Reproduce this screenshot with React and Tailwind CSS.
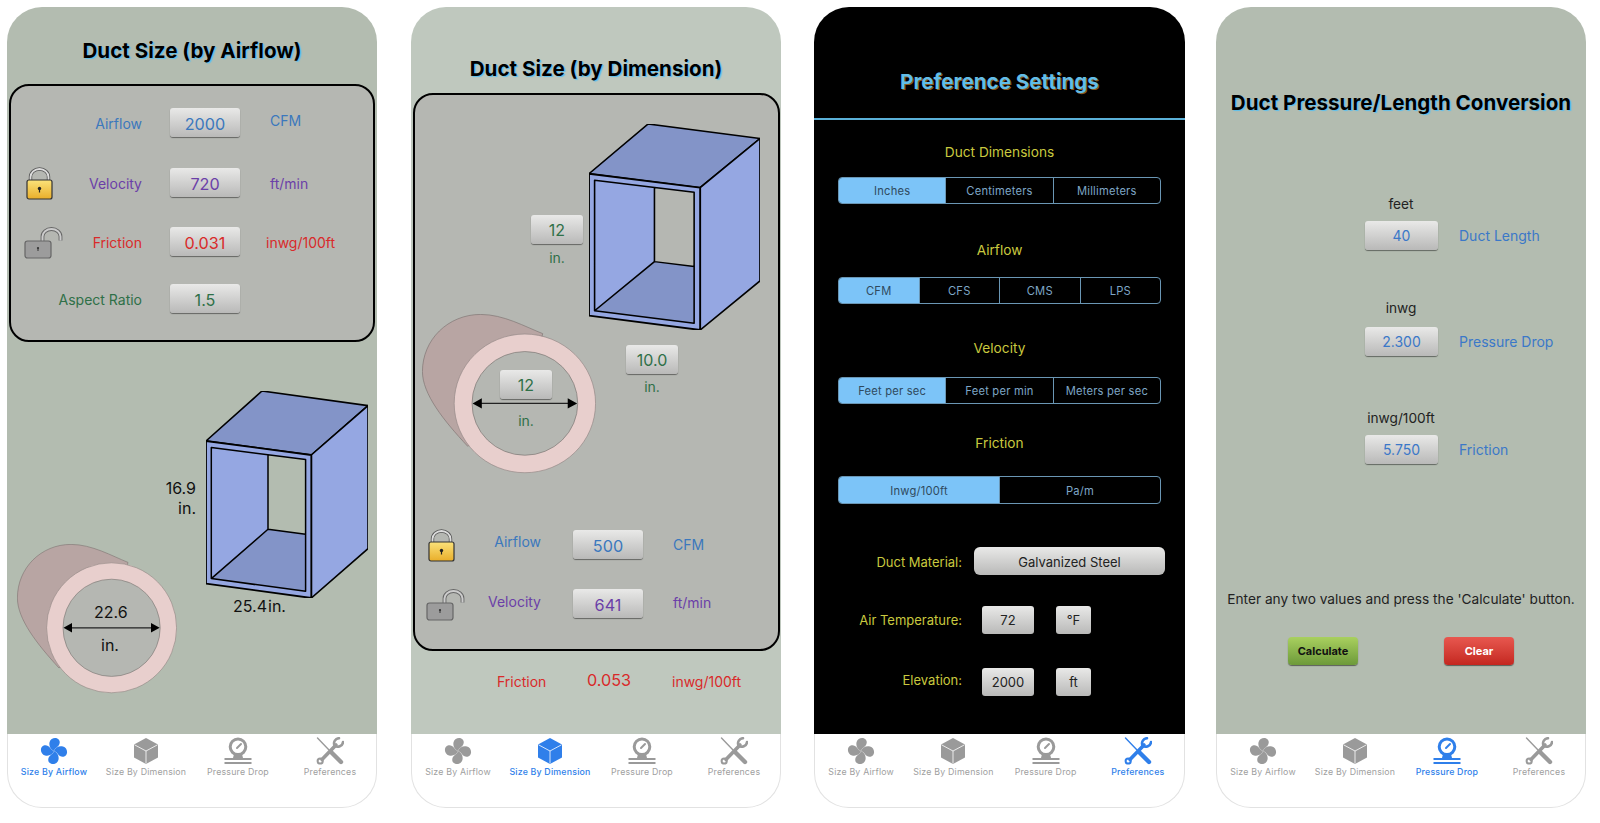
import React from 'react';

const fieldClass = 'flex items-center justify-center rounded-[3px] bg-linear-to-b from-[#e9e9e8] to-[#b9b9b8] shadow-[0_1px_1px_rgba(0,0,0,0.45)]';

// Grey value box used all over the screens
const Field = ({ value, className, textClass }) => (
  <div className={`${fieldClass} ${className}`}>
    <span className={textClass}>{value}</span>
  </div>
);

const FanIcon = ({ color }) => (
  <svg width="28" height="28" viewBox="0 0 28 28" fill={color}>
    {[0, 90, 180, 270].map(deg => (
      <path
        key={deg}
        transform={`rotate(${deg} 14 14)`}
        d="M14 14 C10.5 12.5 8.6 9 9.6 5 C10.6 1 15.8 -0.3 18.4 2.2 C21 4.8 19.5 8.4 17.2 10 C15.6 11.2 14.6 12.4 14 14Z"
      />
    ))}
  </svg>
);

const CubeIcon = ({ color }) => (
  <svg width="28" height="28" viewBox="0 0 28 28">
    <path d="M14 1 L26 7.5 V20.5 L14 27 L2 20.5 V7.5Z" fill={color} />
    <path d="M2.5 7.8 L14 14 L25.5 7.8 M14 14 V26.5" stroke="#fff" strokeWidth="0.8" fill="none" />
  </svg>
);

const GaugeIcon = ({ color }) => (
  <svg width="28" height="28" viewBox="0 0 28 28" fill="none" stroke={color}>
    <circle cx="14" cy="9.8" r="7.8" strokeWidth="3" />
    <path d="M13 11 L17 7" strokeWidth="2" strokeLinecap="round" />
    <path d="M10 17 L18 17 L19 21 L9 21Z" fill={color} stroke="none" />
    <path d="M0.5 22 H27.5 M0.5 26 H27.5" strokeWidth="1.8" />
  </svg>
);

const ToolsIcon = ({ color }) => (
  <svg width="28" height="28" viewBox="0 0 28 28" fill="none" stroke={color} strokeLinecap="round">
    <path d="M1.5 1 L13 13" strokeWidth="1.4" />
    <path d="M15 15 L25 25" strokeWidth="4.4" />
    <path d="M6 22.5 L20 8" strokeWidth="3.6" />
    <circle cx="4.2" cy="24" r="2.6" strokeWidth="2" />
    <path d="M23 1.2 A5.2 5.2 0 0 0 18.5 8.5 A5.2 5.2 0 0 0 27 5" strokeWidth="2.6" />
  </svg>
);

const tabs = [
  { label: 'Size By Airflow', Icon: FanIcon },
  { label: 'Size By Dimension', Icon: CubeIcon },
  { label: 'Pressure Drop', Icon: GaugeIcon },
  { label: 'Preferences', Icon: ToolsIcon },
];

const TabBar = ({ active }) => (
  <div className="grid grid-cols-4 h-[74px] shrink-0 bg-white rounded-b-[35px] border border-t-0 border-[#e2e2e2]">
    {tabs.map((tab, idx) => {
      const color = idx === active ? '#2f7fea' : '#9a9a9a';
      return (
        <div key={tab.label} className="flex flex-col items-center pt-[3px]">
          <tab.Icon color={color} />
          <span
            className={`mt-[1px] text-[8.8px] leading-[12px] tracking-[0.2px] whitespace-nowrap ${idx === active ? 'text-[#2f7fea] font-medium' : 'text-[#a0a0a0]'}`}
          >
            {tab.label}
          </span>
        </div>
      );
    })}
  </div>
);

const ClosedLock = () => (
  <svg width="27" height="33" viewBox="0 0 27 33" className="shrink-0 translate-y-[1px]">
    <defs>
      <linearGradient id="gold" x1="0" y1="0" x2="0" y2="1">
        <stop offset="0" stopColor="#fbe27a" />
        <stop offset="1" stopColor="#e9ae2a" />
      </linearGradient>
    </defs>
    <path d="M4.5 14 V10 A9 8 0 0 1 22.5 10 V14" fill="none" stroke="#555" strokeWidth="3.4" />
    <path d="M4.5 14 V10 A9 8 0 0 1 22.5 10 V14" fill="none" stroke="#ddd" strokeWidth="1.8" />
    <rect x="1" y="13" width="25" height="19" rx="2" fill="url(#gold)" stroke="#333" strokeWidth="1.2" />
    <circle cx="13.5" cy="21.5" r="1.7" fill="#222" />
    <rect x="12.9" y="22" width="1.2" height="3.5" fill="#222" />
  </svg>
);

const OpenLock = () => (
  <svg width="40" height="32" viewBox="0 0 40 32" className="shrink-0 translate-y-[1px]">
    <path d="M18.5 15 V9.5 A9 7.5 0 0 1 36.5 9.5 V13.5" fill="none" stroke="#666" strokeWidth="3.8" />
    <path d="M18.5 15 V9.5 A9 7.5 0 0 1 36.5 9.5 V13.5" fill="none" stroke="#ccc" strokeWidth="2" />
    <rect x="1" y="14" width="26" height="17" rx="2.5" fill="#9c9c9c" stroke="#666" strokeWidth="1.2" />
    <circle cx="14" cy="21" r="1.1" fill="#333" />
    <rect x="13.5" y="21" width="1" height="3" fill="#333" />
  </svg>
);

const DuctBox = ({ className, holeColor }) => (
  <svg viewBox="0 0 162 207" preserveAspectRatio="none" className={`absolute ${className}`} strokeLinejoin="round">
    <path d="M0 50 L56 0 L162 14.6 L105.3 64Z" fill="#8394c8" stroke="#000" strokeWidth="1.6" />
    <path d="M105.3 64 L162 14.6 V157.6 L105.3 207Z" fill="#95a7e2" stroke="#000" strokeWidth="1.6" />
    <path d="M0 50 L105.3 64 V207 L0 192.6Z" fill="#95a7e2" stroke="#000" strokeWidth="1.8" />
    <path d="M62 64.3 L99.6 68.6 V143.3 L62 138.3Z" fill={holeColor} />
    <path d="M5.3 187.6 L62 138.3 L99.6 143.3 V200.3Z" fill="#8394c8" />
    <path d="M5.3 56.6 L99.6 68.6 V200.3 L5.3 187.6Z M62 64 V138.3 L5.3 187.6 M62 138.3 L99.6 143.3" fill="none" stroke="#000" strokeWidth="1.5" />
  </svg>
);

const RoundDuct = ({ className, arrow, innerColor = '#b5b7b2' }) => (
  <svg viewBox="0 0 160 150" preserveAspectRatio="none" className={`absolute ${className}`}>
    <path d="M111 18.4 C95 12 75 0.4 54 0.4 C24 0.4 0.4 24 0.4 54 C0.4 75 20 100 42 124 L94 84Z" fill="#b8a5a3" stroke="#7d7270" strokeWidth="0.6" />
    <circle cx="94.6" cy="83.8" r="65" fill="#e8cfcd" stroke="#8f8482" strokeWidth="0.6" />
    <circle cx="94.6" cy="83.8" r="48.6" fill={innerColor} stroke="#77726f" strokeWidth="0.6" />
    {arrow && (
      <>
        <path d="M53 83.8 H136" stroke="#222" strokeWidth="1.3" />
        <path d="M46.5 83.8 L55 79 V88.6Z M142.7 83.8 L134 79 V88.6Z" fill="#000" />
      </>
    )}
  </svg>
);

// One input row inside the dark-outlined panels
const CalcRow = ({ icon, label, value, unit, color, labelClass, labelTextClass = 'pt-[2px]', unitClass = 'ml-[30px]', className }) => (
  <div className={`flex items-center h-[29px] ${className}`}>
    <div className={`flex items-center justify-end shrink-0 ${labelClass}`}>
      {icon}
      <span className={`ml-auto text-[14px] ${color} ${labelTextClass}`}>{label}</span>
    </div>
    <Field value={value} className="w-[70px] h-[29px] shrink-0" textClass={`pt-[3px] text-[16.2px] ${color}`} />
    {unit && <span className={`text-[14px] ${color} ${unitClass}`}>{unit}</span>}
  </div>
);

const Title = ({ children, className }) => (
  <div className={`flex items-center justify-center shrink-0 text-[20.6px] font-bold text-black [text-shadow:1.5px_1px_1px_#5cc0ee] ${className}`}>
    <span className="translate-y-[1px]">{children}</span>
  </div>
);

const AirflowScreen = () => (
  <div className="flex flex-col w-[370px] h-[801px] ml-[7px] shrink-0">
    <div className="flex flex-col flex-1 bg-[#b3bcb0] rounded-t-[35px]">
      <Title className="h-[77px] pt-[9px]">Duct Size (by Airflow)</Title>
      <div className="ml-[2px] w-[366px] h-[258px] pt-[22px] rounded-[20px] border-2 border-black bg-[#b5b7b2]">
        <CalcRow label="Airflow" value="2000" unit="CFM" color="text-[#3b78bd]" labelClass="w-[131px] mr-[28px]" labelTextClass="pt-[1px]" unitClass="ml-[30px] -translate-y-[2px]" />
        <CalcRow icon={<span className="ml-[15px]"><ClosedLock /></span>} label="Velocity" value="720" unit="ft/min" color="text-[#6b3fa8]" labelClass="w-[131px] mr-[28px]" unitClass="ml-[30px] translate-y-[1px]" className="mt-[31px]" />
        <CalcRow icon={<span className="ml-[13px]"><OpenLock /></span>} label="Friction" value="0.031" unit="inwg/100ft" color="text-[#d92a2a]" labelClass="w-[131px] mr-[28px]" unitClass="ml-[26px] translate-y-[1px]" className="mt-[30px]" />
        <CalcRow label="Aspect Ratio" value="1.5" color="text-[#2f7048]" labelClass="w-[131px] mr-[28px]" className="mt-[28px]" />
      </div>
      <div className="relative flex-1 text-[16px] text-[#111]">
        <DuctBox className="left-[199px] top-[49px] w-[162px] h-[207px]" holeColor="#b3bcb0" />
        <RoundDuct className="left-[10px] top-[202px] w-[160px] h-[150px]" arrow />
        <div className="absolute right-[181px] top-[136px] text-right leading-[20px]">
          <div>16.9</div>
          <div>in.</div>
        </div>
        <span className="absolute left-[226px] top-[253px] leading-[22px]">25.4<span className="ml-[1px]">in.</span></span>
        <span className="absolute left-[87px] top-[259px] w-[32px] text-center leading-[22px]">22.6</span>
        <span className="absolute left-[87px] top-[292px] w-[32px] text-center leading-[22px]">in.</span>
      </div>
    </div>
    <TabBar active={0} />
  </div>
);

const SizeTag = ({ value, className, gapClass = 'mt-[5px]' }) => (
  <div className={`absolute flex flex-col items-center w-[52px] ${className}`}>
    <Field value={value} className="w-[52px] h-[29px]" textClass="text-[16px] text-[#2f7048]" />
    <span className={`${gapClass} text-[14px] leading-[18px] text-[#2f7048]`}>in.</span>
  </div>
);

const DimensionScreen = () => (
  <div className="flex flex-col w-[370px] h-[801px] ml-[34px] shrink-0">
    <div className="flex flex-col flex-1 bg-[#bfc8be] rounded-t-[35px]">
      <Title className="h-[86px] pt-[37px]">Duct Size (by Dimension)</Title>
      <div className="ml-[2px] w-[367px] h-[558px] rounded-[20px] border-2 border-black bg-[#b5b7b2]">
        <div className="relative h-[435px]">
          <DuctBox className="left-[174px] top-[29px] w-[171px] h-[206px]" holeColor="#b5b7b2" />
          <RoundDuct className="left-[7px] top-[219px] w-[174px] h-[160px]" arrow />
          <SizeTag value="12" className="left-[116px] top-[120px]" />
          <SizeTag value="10.0" className="left-[211px] top-[250px]" gapClass="mt-[4px]" />
          <SizeTag value="12" className="left-[85px] top-[275px]" gapClass="mt-[13px]" />
        </div>
        <CalcRow icon={<span className="ml-[13px]"><ClosedLock /></span>} label="Airflow" value="500" unit="CFM" color="text-[#3b78bd]" labelClass="w-[126px] mr-[32px]" labelTextClass="-translate-y-[3px]" unitClass="ml-[30px]" />
        <CalcRow icon={<span className="ml-[11px]"><OpenLock /></span>} label="Velocity" value="641" unit="ft/min" color="text-[#6b3fa8]" labelClass="w-[126px] mr-[32px]" labelTextClass="-translate-y-[2px]" unitClass="ml-[30px] -translate-y-[1px]" className="mt-[30px]" />
      </div>
      <div className="flex items-center h-[20px] mt-[20px] text-[14px] text-[#d92a2a]">
        <span className="ml-[86px] w-[90px]">Friction</span>
        <span className="text-[16.2px] w-[85px] -translate-y-[1px]">0.053</span>
        <span>inwg/100ft</span>
      </div>
    </div>
    <TabBar active={1} />
  </div>
);

const Segments = ({ items, className, heightClass = 'h-[27px]' }) => (
  <div className={`flex ml-[24px] w-[323px] ${heightClass} rounded-[4px] border border-[#6a96b4] overflow-hidden ${className}`}>
    {items.map((item, idx) => (
      <div
        key={item}
        className={`flex-1 flex items-center justify-center pt-[2px] text-[11.2px] tracking-[0.2px] ${idx > 0 ? 'border-l border-[#6a96b4]' : ''} ${idx === 0 ? 'bg-[#7cc4f8] text-[#2f4a5e]' : 'text-[#7ea6c6]'}`}
      >
        {item}
      </div>
    ))}
  </div>
);

const Heading = ({ children, className }) => (
  <div className={`h-[20px] leading-[20px] text-center text-[13.7px] text-[#c9c93f] ${className}`}>{children}</div>
);

const PrefRow = ({ label, className, labelClass, children }) => (
  <div className={`flex items-center h-[28px] ${className}`}>
    <span className={`w-[148px] shrink-0 text-right text-[13px] text-[#c9c93f] ${labelClass}`}>{label}</span>
    {children}
  </div>
);

const PreferenceScreen = () => (
  <div className="flex flex-col w-[371px] h-[801px] ml-[33px] shrink-0">
    <div className="flex-1 bg-black rounded-t-[35px]">
      <div className="flex items-center justify-center h-[113px] pt-[40px] border-b-2 border-[#5ab0d8] text-[20.6px] font-bold text-[#62bde8] [text-shadow:1px_1px_0_#8a5a20]">
        Preference Settings
      </div>
      <Heading className="mt-[22px]">Duct Dimensions</Heading>
      <Segments className="mt-[15px]" items={['Inches', 'Centimeters', 'Millimeters']} />
      <Heading className="mt-[36px]">Airflow</Heading>
      <Segments className="mt-[17px]" items={['CFM', 'CFS', 'CMS', 'LPS']} />
      <Heading className="mt-[34px]">Velocity</Heading>
      <Segments className="mt-[19px]" items={['Feet per sec', 'Feet per min', 'Meters per sec']} />
      <Heading className="mt-[29px]">Friction</Heading>
      <Segments className="mt-[23px]" heightClass="h-[28px]" items={['Inwg/100ft', 'Pa/m']} />
      <PrefRow label="Duct Material:" labelClass="translate-y-[2px]" className="mt-[43px]">
        <Field value="Galvanized Steel" className="ml-[12px] w-[191px] h-[28px] rounded-[6px]" textClass="pt-[3px] text-[13px] text-[#222]" />
      </PrefRow>
      <PrefRow label="Air Temperature:" labelClass="translate-y-[1px]" className="mt-[31px]">
        <Field value="72" className="ml-[20px] w-[52px] h-[28px]" textClass="pt-[2px] text-[13px] text-[#222]" />
        <Field value="°F" className="ml-[22px] w-[35px] h-[28px]" textClass="pt-[2px] text-[13px] text-[#222]" />
      </PrefRow>
      <PrefRow label="Elevation:" labelClass="-translate-y-[1px]" className="mt-[34px]">
        <Field value="2000" className="ml-[20px] w-[52px] h-[28px]" textClass="pt-[2px] text-[13px] text-[#222]" />
        <Field value="ft" className="ml-[22px] w-[35px] h-[28px]" textClass="pt-[2px] text-[13px] text-[#222]" />
      </PrefRow>
    </div>
    <TabBar active={3} />
  </div>
);

const PressureGroup = ({ caption, value, name, className, gapClass = 'mt-[10px]' }) => (
  <div className={className}>
    <div className="h-[14px] leading-[14px] text-center text-[13.7px] text-[#222]">{caption}</div>
    <div className={`flex items-center ${gapClass}`}>
      <Field value={value} className="ml-[149px] w-[73px] h-[29px]" textClass="text-[14px] text-[#3b78c8]" />
      <span className="ml-[21px] text-[14px] text-[#3b78c8]">{name}</span>
    </div>
  </div>
);

const PressureScreen = () => (
  <div className="flex flex-col w-[370px] h-[801px] ml-[31px] shrink-0">
    <div className="flex-1 bg-[#b3bcb0] rounded-t-[35px]">
      <Title className="h-[190px]">Duct Pressure/Length Conversion</Title>
      <PressureGroup caption="feet" value="40" name="Duct Length" />
      <PressureGroup caption="inwg" value="2.300" name="Pressure Drop" className="mt-[51px]" gapClass="mt-[12px]" />
      <PressureGroup caption="inwg/100ft" value="5.750" name="Friction" className="mt-[55px]" />
      <div className="mt-[125px] h-[20px] leading-[20px] text-center text-[13.7px] text-[#222] whitespace-nowrap">
        Enter any two values and press the 'Calculate' button.
      </div>
      <div className="flex mt-[28px] ml-[72px] gap-[86px] text-[11px] font-bold">
        <div className="flex items-center justify-center w-[70px] h-[28px] rounded-[4px] bg-linear-to-b from-[#a9d05f] to-[#6d9a3a] text-[#111] shadow-[0_1px_1px_rgba(0,0,0,0.5)]">Calculate</div>
        <div className="flex items-center justify-center w-[70px] h-[28px] rounded-[4px] bg-linear-to-b from-[#e8574f] to-[#c4261f] text-white shadow-[0_1px_1px_rgba(0,0,0,0.5)]">Clear</div>
      </div>
    </div>
    <TabBar active={2} />
  </div>
);

const App = () => (
  <div className="flex h-[823px] w-[1600px] overflow-hidden pt-[7px] bg-white font-[Inter,sans-serif]">
    <AirflowScreen />
    <DimensionScreen />
    <PreferenceScreen />
    <PressureScreen />
  </div>
);

export default App;
